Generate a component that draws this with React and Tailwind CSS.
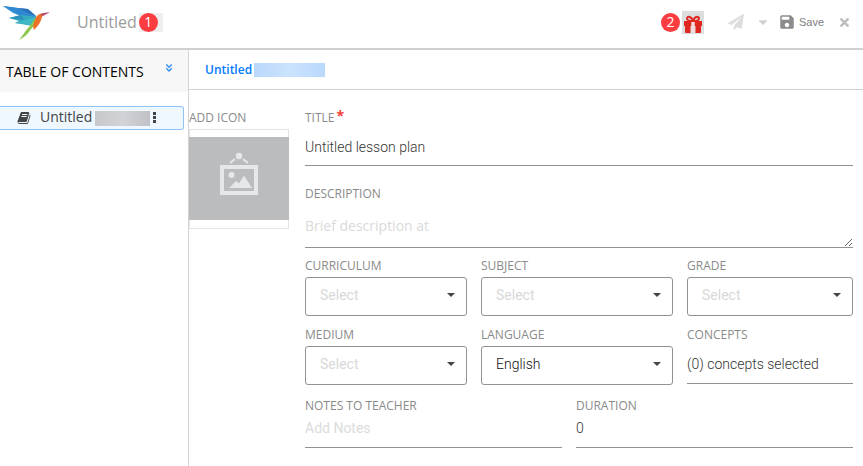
import React from "react";
import { FaCaretDown, FaAngleDoubleDown, FaTimes } from "react-icons/fa";
import { MdSave } from "react-icons/md";

const labelClass = "block font-['Open_Sans','Noto_Sans',sans-serif] text-xs leading-4 font-medium text-[#8a8a8a] uppercase";
const fieldClass = "block w-full border-b border-[#929292] bg-transparent text-sm text-[#333] outline-none";
const inputClass = `${fieldClass} font-['Roboto',sans-serif] font-light placeholder:font-normal placeholder:text-[#dcdcdc]`;

function Logo() {
  return (
    <svg viewBox="0 0 48 36" className="h-9 w-12 shrink-0" role="img" aria-label="Hummingbird logo">
      <path d="M1 2 L16 4 L26 5 L34 12 L34 13 L19 12 L11 9 Z" fill="#3a9add" />
      <path d="M16 4 L26 5 L34 12 L25 9 Z" fill="#2b6fbd" />
      <path d="M1 2 L16 4 L25 9 L34 13 L17 11 Z" fill="#2f88d2" />
      <path d="M7 14 L19 11 L34 13 L31 22 L13 19 L17 17 Z" fill="#35a9bf" />
      <path d="M7 14 L19 11 L22 16 Z" fill="#2d93bd" />
      <path d="M13 19 L34 13 L31 22 C25 19 18 20 13 19 Z" fill="#3fbac4" />
      <path d="M34 13 L36 17 L31 23 C28 25 27 31 17 36 C21 31 23 27 27 23 Z" fill="#8cc84b" />
      <path d="M34 13 C36 10 39 9 42 10 L40 13 C39 18 36 22 32 26 L31 22 Z" fill="#ee7127" />
      <path d="M38 10 C40 9 43 9 48 8 L41 12 Z" fill="#b64a6c" />
    </svg>
  );
}

function GiftIcon() {
  return (
    <svg viewBox="0 0 20 18" className="mt-1 h-[18px] w-5" aria-hidden="true">
      <path d="M10 6C8 6 4 6 4 3.500S8.500 1 10 6C11.500 1 16 1 16 3.500S12 6 10 6" fill="none" stroke="#e0271f" strokeWidth="2" />
      <path d="M2 11h5.500v7H3a1 1 0 0 1-1-1zM12.500 11H18v6a1 1 0 0 1-1 1h-4.500zM1 6h7.500v5H1zM11.500 6H19v5h-7.500z" fill="#e0271f" />
      <path d="M8.500 7h3v10h-3z" fill="#f7dcdb" />
    </svg>
  );
}

function PlaneIcon() {
  return (
    <svg viewBox="0 0 1792 1792" className="size-4" fill="currentColor" aria-hidden="true">
      <path d="M1764 11q33 24 27 64l-256 1536q-5 29-32 45-14 8-31 8-11 0-24-5l-453-185-242 295q-18 23-49 23-13 0-22-4-19-7-30.500-23.500t-11.500-36.500v-349l864-1059-1069 925-395-162q-37-14-40-55-2-40 32-59l1664-960q15-9 32-9 20 0 36 11z" />
    </svg>
  );
}

function BookIcon() {
  return (
    <svg viewBox="0 0 1792 1792" className="size-3.5" fill="currentColor" aria-hidden="true">
      <path d="M1703 478q40 57 18 129l-275 906q-19 64-76.500 107.500t-122.500 43.500h-923q-77 0-148.500-53.500t-99.500-131.500q-24-67-2-127 0-4 3-27t4-37q1-8-3-21.500t-3-19.500q2-11 8-21t16.500-23.500 16.500-23.500q23-38 45-91.500t30-91.500q3-10 .5-30t-.5-28q3-11 17-28t17-23q21-36 42-92t25-90q1-9-2.500-32t.5-28q4-13 22-30.500t22-22.500q19-26 42.500-84.500t27.500-96.500q1-8-3-25.500t-2-26.500q2-8 9-18t18-23 17-21q8-12 16.500-30.500t15-35 16-36 19.500-32 26.500-23.500 36-11.500 47.500 5.500l-1 3q38-9 51-9h761q74 0 114 56t18 130l-274 906q-36 119-71.500 153.500t-128.500 34.500h-869q-27 0-38 15-11 16-1 43 24 70 144 70h923q29 0 56-15.500t35-41.500l300-987q7-22 5-57 38 15 59 43zm-1064 2q-4 13 2 22.500t20 9.500h608q13 0 25.500-9.500t16.500-22.500l21-64q4-13-2-22.500t-20-9.500h-608q-13 0-25.500 9.500t-16.500 22.500zm-83 256q-4 13 2 22.500t20 9.500h608q13 0 25.500-9.500t16.500-22.500l21-64q4-13-2-22.500t-20-9.500h-608q-13 0-25.500 9.500t-16.500 22.500z" />
    </svg>
  );
}

function Badge({ children }) {
  return (
    <span className="flex size-[19px] items-center justify-center rounded-full bg-[#fb3c40] font-['Open_Sans',sans-serif] text-sm leading-none text-white">
      {children}
    </span>
  );
}

function SelectField({ id, label, value = "" }) {
  return (
    <div>
      <label htmlFor={id} className={labelClass}>{label}</label>
      <div className="relative mt-[3px]">
        <select
          id={id}
          defaultValue={value}
          className={`block h-[39px] w-full appearance-none rounded-[3px] border border-[#929292] bg-white pl-3.5 pb-1 font-['Roboto',sans-serif] text-sm outline-none ${value ? "font-light text-[#111]" : "font-normal text-[#d8d8d8]"}`}
        >
          <option value={value}>{value || "Select"}</option>
        </select>
        <svg viewBox="0 0 8 4" className="pointer-events-none absolute top-4 right-3 h-1 w-2" aria-hidden="true">
          <path d="M0 0h8L4 4z" fill="#444" />
        </svg>
      </div>
    </div>
  );
}

function Header() {
  return (
    <header className="flex h-[50px] items-center border-b-2 border-[#d0d0d0] pl-0.5 pr-3 pb-1">
      <Logo />
      <h1 className="ml-[27px] font-['Open_Sans',sans-serif] text-base text-[#9b9b9b]">Untitled</h1>
      <span className="ml-0.5 flex w-6 bg-[#eeeeee]"><Badge>1</Badge></span>
      <div className="ml-auto flex items-center">
        <Badge>2</Badge>
        <button type="button" aria-label="Rewards" className="ml-0.5 flex h-[23px] w-[22px] items-center justify-center bg-[#dcdddf]">
          <GiftIcon />
        </button>
        <button type="button" aria-label="Send" className="ml-6 text-[#dedede]"><PlaneIcon /></button>
        <button type="button" aria-label="Send options" className="ml-3 text-[#d2d2d2]"><FaCaretDown size={14} /></button>
        <button type="button" className="ml-2 flex items-center gap-[3px] font-['Liberation_Sans',Arial,sans-serif] text-[11px] text-[#808080]">
          <MdSave size={18} className="text-[#8c8c8c]" />
          Save
        </button>
        <button type="button" aria-label="Close" className="ml-3.5 text-[#bdbdbd]"><FaTimes size={13} /></button>
      </div>
    </header>
  );
}

function Sidebar() {
  return (
    <aside className="w-[189px] shrink-0 border-r border-[#d4d4d4]">
      <div className="flex h-[42px] items-center justify-between bg-[#f7f7f7] pt-0.5 pr-3.5 pl-1.5">
        <h2 className="font-['Open_Sans',sans-serif] text-sm font-medium text-black">TABLE OF CONTENTS</h2>
        <button type="button" aria-label="Expand all" className="mb-2 text-[#3b93f7]"><FaAngleDoubleDown size={10} /></button>
      </div>
      <div className="mt-3.5 mr-1 flex h-6 items-center rounded-r-[3px] border border-l-0 border-[#8fc2f5] bg-[#f0f8ff] pl-[17px] font-['Open_Sans',sans-serif] text-sm text-[#444]">
        <BookIcon />
        <span className="ml-[9px] pb-0.5 font-medium">Untitled</span>
        <span className="ml-[3px] h-[15px] w-[55px] bg-linear-to-r from-[#c6c8cc] via-[#d2d3d7] to-[#bfc1c6]" />
        <button type="button" aria-label="More options" className="mb-0.5 ml-[3px]">
          <svg viewBox="0 0 3 11" className="h-[11px] w-[3px]" fill="#444" aria-hidden="true">
            <path d="M0 0h3v3H0zM0 4h3v3H0zM0 8h3v3H0z" />
          </svg>
        </button>
      </div>
    </aside>
  );
}

function IconPicker() {
  return (
    <div className="w-[100px] shrink-0">
      <span className={labelClass}>Add icon</span>
      <button type="button" aria-label="Add icon" className="mt-[3px] flex h-[100px] w-full items-start border border-[#e4e4e4] pt-[7px]">
        <span className="-mx-px flex h-[83px] flex-1 justify-center bg-[#bbbcbe] pt-[15px]">
          <svg viewBox="0 0 40 44" className="h-11 w-10" fill="none" aria-hidden="true">
            <circle cx="20" cy="4" r="3.200" fill="#e6e7e9" />
            <path d="M16 7l-5 4M24 7l5 4" stroke="#e6e7e9" strokeWidth="2" />
            <path d="M3 15h34v26H3z" stroke="#e6e7e9" strokeWidth="4" />
            <circle cx="12.500" cy="23" r="3" fill="#e6e7e9" />
            <path d="M10 36l7-7 3 2.500 5-8L33 36z" fill="#e6e7e9" />
          </svg>
        </span>
      </button>
    </div>
  );
}

export default function App() {
  return (
    <div className="min-h-screen bg-white">
      <Header />
      <div className="flex min-h-[416px]">
        <Sidebar />
        <main className="min-w-0 flex-1">
          <nav className="flex h-10 items-center border-b border-[#d0d0d0] pl-4">
            <a href="#untitled" className="flex items-center font-['Open_Sans',sans-serif] text-xs font-semibold text-[#007bff]">
              Untitled
              <span className="ml-0.5 h-3.5 w-[71px] bg-linear-to-r from-[#b9d9fc] via-[#cbe3fd] to-[#b9d9fc]" />
            </a>
          </nav>
          <div className="flex gap-4 pt-5 pr-2.5">
            <IconPicker />
            <form className="min-w-0 flex-1">
              <label htmlFor="title" className={`${labelClass} flex`}>
                Title
                <span className="ml-0.5 text-sm leading-3 font-bold text-[#f5403a]">*</span>
              </label>
              <input id="title" defaultValue="Untitled lesson plan" className={`${inputClass} h-10 pt-0.5`} />
              <label htmlFor="description" className={`${labelClass} mt-5`}>Description</label>
              <textarea
                id="description"
                placeholder="Brief description at"
                className={`${fieldClass} h-[46px] resize-y overflow-hidden pt-3.5 font-['Open_Sans',sans-serif] placeholder:font-medium placeholder:text-[#dadada]`}
              />
              <div className="mt-2.5 grid grid-cols-[162fr_192fr_166fr] gap-x-3.5 gap-y-[11px]">
                <SelectField id="curriculum" label="Curriculum" />
                <SelectField id="subject" label="Subject" />
                <SelectField id="grade" label="Grade" />
                <SelectField id="medium" label="Medium" />
                <SelectField id="language" label="Language" value="English" />
                <div>
                  <label htmlFor="concepts" className={labelClass}>Concepts</label>
                  <input id="concepts" readOnly value="(0) concepts selected" className={`${inputClass} mt-px h-10`} />
                </div>
              </div>
              <div className="mt-[13px] grid grid-cols-[257fr_277fr] gap-x-3.5">
                <div>
                  <label htmlFor="notes" className={labelClass}>Notes to teacher</label>
                  <input id="notes" placeholder="Add Notes" className={`${inputClass} h-[34px] pb-1.5`} />
                </div>
                <div>
                  <label htmlFor="duration" className={labelClass}>Duration</label>
                  <input id="duration" defaultValue="0" className={`${inputClass} h-[34px] pb-1.5`} />
                </div>
              </div>
            </form>
          </div>
        </main>
      </div>
    </div>
  );
}
